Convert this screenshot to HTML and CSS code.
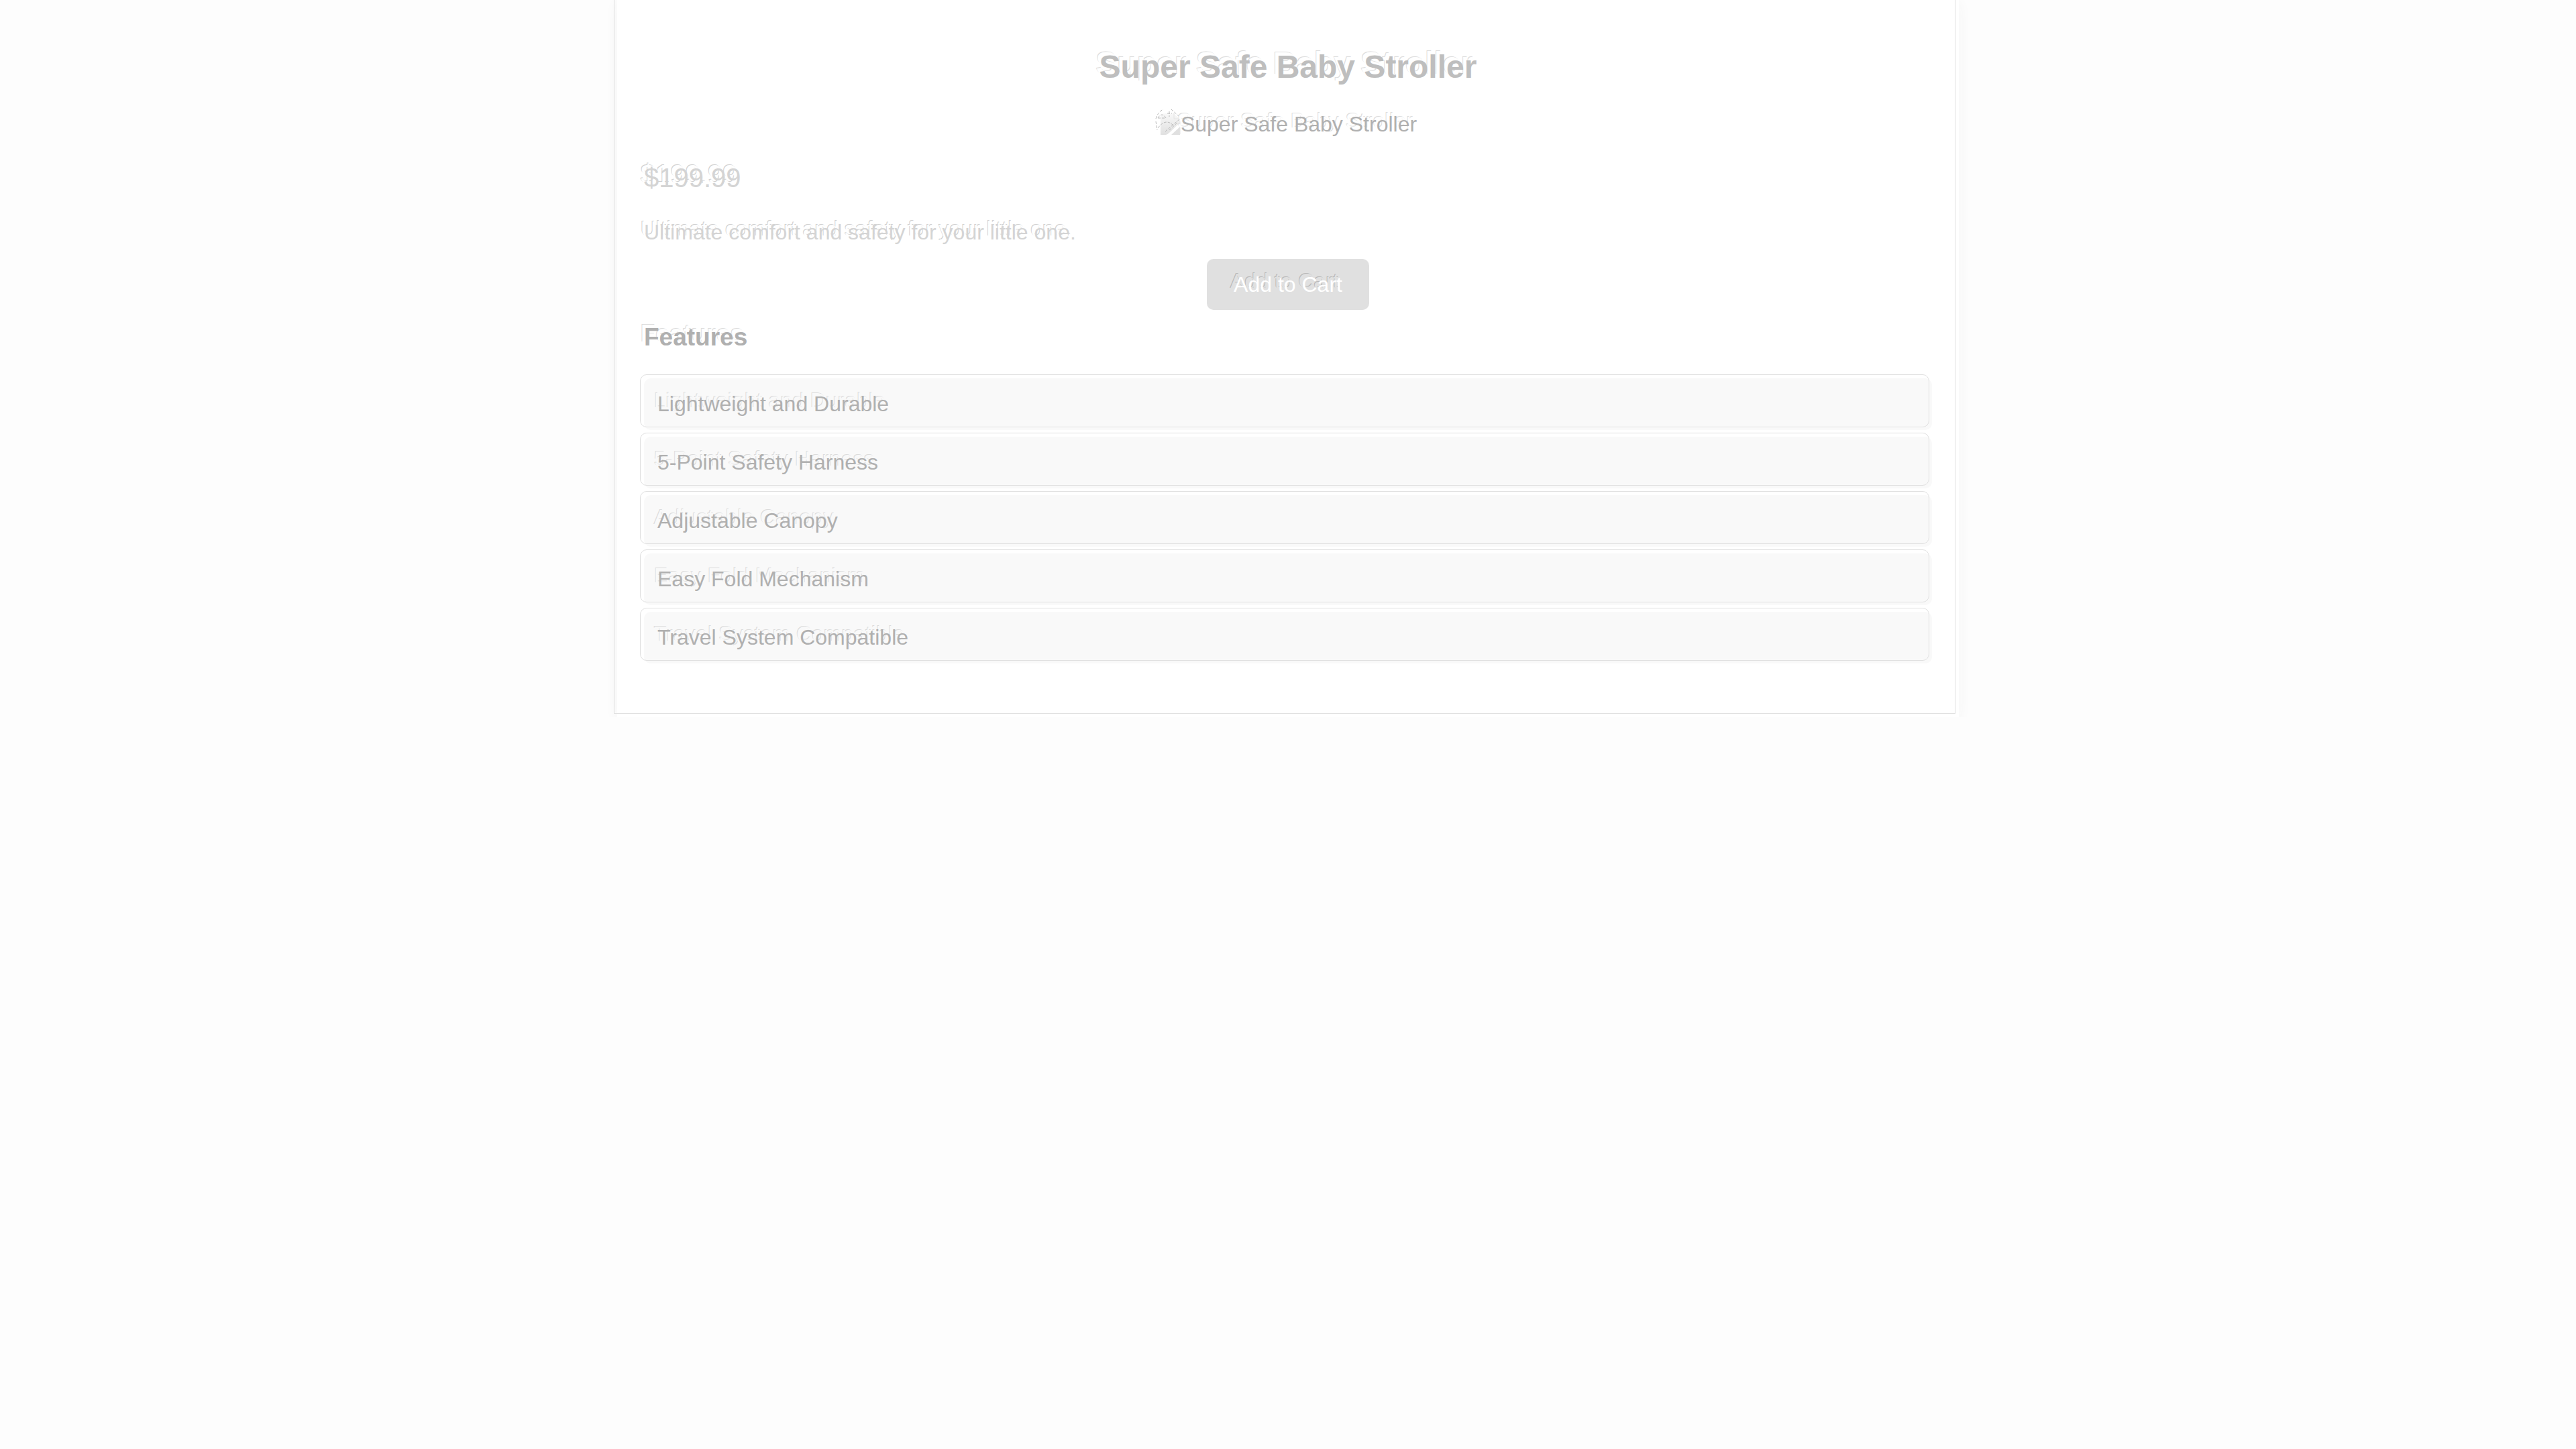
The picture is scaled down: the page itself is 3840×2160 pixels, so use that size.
FILE: index.html
```html
<!DOCTYPE html>
<html lang="en">
<head>
<meta charset="utf-8">
<title>Super Safe Baby Stroller</title>
<link rel="stylesheet" href="styles.css">
</head>
<body>
<main class="product">
  <h1 class="product-name">Super Safe Baby Stroller</h1>
  <div class="product-image">
    <svg class="image-icon" viewBox="0 0 32 32" aria-hidden="true">
      <defs><linearGradient id="page" x1="0" y1="0" x2="0" y2="1"><stop offset="0" stop-color="#f8f8f8"/><stop offset="1" stop-color="#e0e0e0"/></linearGradient></defs>
      <path d="M2 3Q5 0 10 0H22L31 9V14L16 28Q13 31 10 32H2Z" fill="url(#page)"/>
      <path d="M31 20V32H18Z" fill="#e0e0e0"/>
      <g fill="none" stroke="#b8b8b8" stroke-width="1">
        <path d="M-5 8Q-2 -2 6 -6M18 -6L30 5M15 -3V5M12 0H19M-2 7Q4 -3 10 7ZM-5 12L-3 25M-2 22Q9 7 20 17M9 27L30 9M15 25L28 13" stroke-dasharray="4 2"/>
        <path d="M22 -1V8H31M31 12V31" stroke="#e4e4e4"/>
      </g>
    </svg><span>Super Safe Baby Stroller</span>
  </div>
  <p class="price">$199.99</p>
  <p class="description">Ultimate comfort and safety for your little one.</p>
  <button class="add-to-cart" type="button">Add to Cart</button>
  <h2 class="features-title">Features</h2>
  <ul class="features">
    <li class="feature">Lightweight and Durable</li>
    <li class="feature">5-Point Safety Harness</li>
    <li class="feature">Adjustable Canopy</li>
    <li class="feature">Easy Fold Mechanism</li>
    <li class="feature">Travel System Compatible</li>
  </ul>
</main>
</body>
</html>
```
FILE: styles.css
```css
* { box-sizing: border-box; }

body {
  margin: 0;
  background: #fdfdfd;
  color: #b0b0b0;
  font: 32px/36px "Liberation Sans", Arial, sans-serif;
  text-shadow: -5px -5px 0 #fff, -6px -6px 0 #dcdcdc;
}

.product {
  position: relative;
  max-width: 2000px;
  margin: 0 auto;
  padding: 72px 40px 80px;
  background: #fff;
  box-shadow: 0 4px 20px #f5f5f5;
}

/* fine keyline set up and left of the card edge */
.product::before {
  content: "";
  position: absolute;
  inset: 0 5px 5px -5px;
  border: solid #e0e0e0;
  border-width: 0 1px 1px;
  pointer-events: none;
}

.product-name {
  margin: 0 0 40px;
  color: #bebebe;
  font-size: 48px;
  line-height: 55px;
  text-align: center;
}

.product-image {
  display: flex;
  justify-content: center;
  align-items: center;
  margin-bottom: 40px;
}

.image-icon {
  width: 32px;
  height: 32px;
  overflow: visible;
}

.price {
  margin: 0 0 40px;
  color: #d4d4d4;
  font-size: 40px;
  line-height: 45px;
}

.description {
  margin: 0 0 22px;
  color: #d4d4d4;
}

.price,
.description {
  text-shadow: -5px -5px 0 #fff, -6px -6px 0 #d0d0d0;
}

.add-to-cart {
  display: block;
  margin: 0 auto 20px;
  padding: 20px 40px;
  border: 0;
  border-radius: 10px;
  background: #e0e0e0;
  color: #fff;
  font: inherit;
  text-shadow: -5px -5px 0 #e0e0e0, -6px -6px 0 #b8b8b8;
}

.features-title {
  margin: 0 0 40px;
  font-size: 37px;
  line-height: 42px;
}

.features {
  display: flex;
  flex-direction: column;
  gap: 10px;
  margin: 0;
  padding: 0;
  list-style: none;
}

.feature {
  position: relative;
  padding: 20px;
  border-radius: 10px;
  background: #f9f9f9;
  line-height: 37px;
  text-shadow: -5px -5px 0 #f9f9f9, -6px -6px 0 #dcdcdc;
}

.feature::before {
  content: "";
  position: absolute;
  inset: -6px 4px 4px -6px;
  border: 1px solid #e0e0e0;
  border-radius: 10px;
}
```
